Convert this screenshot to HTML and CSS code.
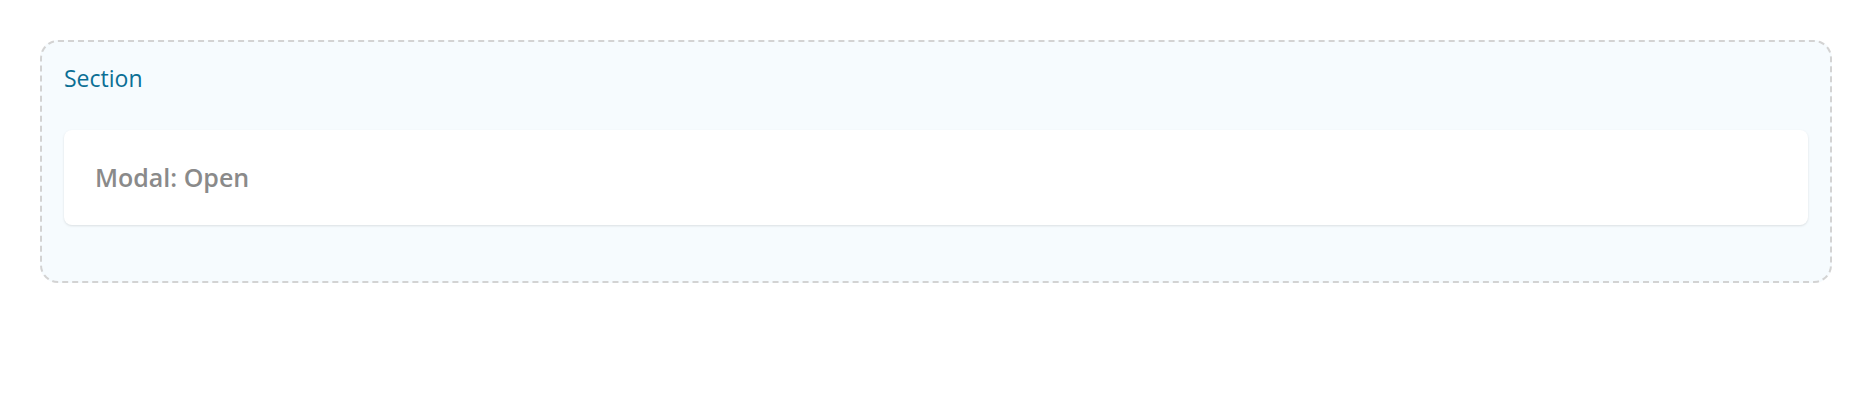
FILE: index.html
```html
<!DOCTYPE html>
<html>
<head>
<meta charset="utf-8">
<link rel="stylesheet" href="styles.css">
</head>
<body>
<div class="page">
  <section class="section">
    <h2 class="section-title">Section</h2>
    <div class="card">
      <h3 class="card-title">Modal: Open</h3>
    </div>
  </section>
</div>
</body>
</html>
```
FILE: styles.css
```css
* {
  box-sizing: border-box;
}
html, body {
  margin: 0;
  padding: 0;
  background: #ffffff;
}
body {
  padding: 8px;
  font-family: "Open Sans", "Noto Sans", sans-serif;
}
.page {
  padding: 32px;
}
.section {
  border: 2px dashed #d3d3d3;
  border-radius: 18px;
  background: #f6fbfe;
  padding: 23px 22px 56px 22px;
  display: flex;
  flex-direction: column;
}
.section-title {
  margin: 0 0 39px 0;
  font-size: 23px;
  line-height: 26px;
  font-weight: 400;
  color: #0b6f95;
}
.card {
  background: #ffffff;
  border-radius: 8px;
  box-shadow: 0 1px 3px rgba(0, 0, 0, 0.08), 0 1px 2px rgba(0, 0, 0, 0.04);
  padding: 32px 31px;
}
.card-title {
  margin: 0;
  font-size: 25px;
  line-height: 31px;
  font-weight: 600;
  color: #8a8a8a;
}
```
